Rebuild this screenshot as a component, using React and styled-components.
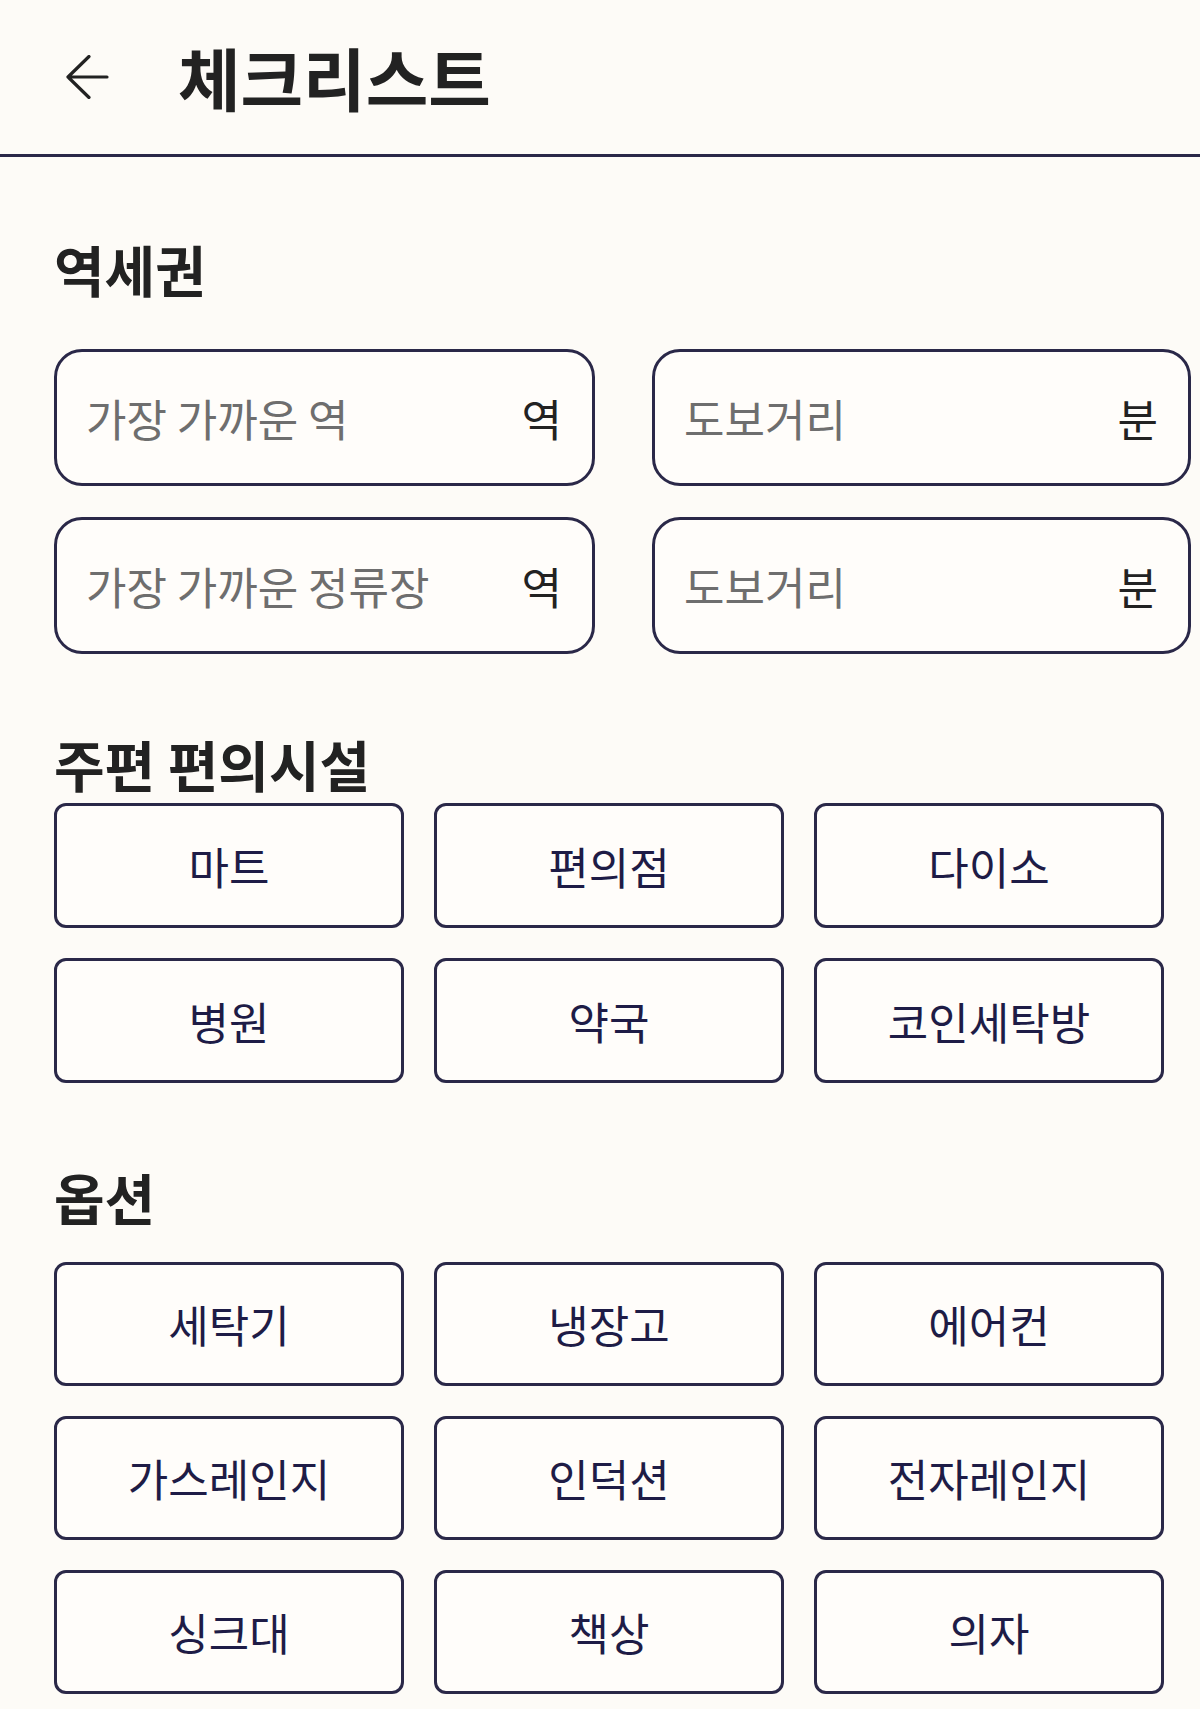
import { useState } from "react";
import styled, { createGlobalStyle } from "styled-components";

const GlobalStyle = createGlobalStyle`
  * {
    box-sizing: border-box;
  }

  body {
    margin: 0;
    background-color: #fdfbf7;
    font-family: "Noto Sans CJK KR", "Noto Sans", sans-serif;
    color: #222;
  }
`;

const Page = styled.div`
  width: 1200px;
  min-height: 1709px;
  background-color: #fdfbf7;
`;

const Header = styled.header`
  display: flex;
  align-items: center;
  height: 157px;
  padding-left: 65px;
  border-bottom: 3px solid #2a2848;
`;

const BackButton = styled.button`
  display: flex;
  align-items: center;
  justify-content: center;
  width: 44px;
  height: 44px;
  padding: 0;
  margin-right: 69px;
  border: none;
  background: none;
  cursor: pointer;
  color: #222;
`;

const Title = styled.h1`
  margin: 0;
  font-size: 68px;
  font-weight: 700;
  line-height: 1.2;
  color: #222;
`;

const Main = styled.main`
  padding: 0 8px 0 54px;
`;

const SectionTitle = styled.h2`
  margin: ${(props) => props.$top}px 0 ${(props) => props.$bottom}px;
  font-size: 55px;
  font-weight: 700;
  line-height: 64px;
  height: 64px;
  color: #222;
`;

const InputGrid = styled.div`
  display: grid;
  grid-template-columns: 541px 539px;
  column-gap: 57px;
  row-gap: 31px;
`;

const Field = styled.label`
  display: flex;
  align-items: center;
  height: 137px;
  padding: 0 30px 0 29px;
  border: 3px solid #2a2848;
  border-radius: 28px;
  background-color: #fffdfa;
`;

const FieldInput = styled.input`
  flex: 1;
  min-width: 0;
  border: none;
  outline: none;
  background: transparent;
  font-family: inherit;
  font-size: 44px;
  color: #222;
  padding: 0;

  &::placeholder {
    color: #6e6e6e;
  }
`;

const Unit = styled.span`
  font-size: 44px;
  color: #222;
  margin-left: 12px;
`;

const ChipGrid = styled.div`
  display: grid;
  grid-template-columns: repeat(3, 350px);
  column-gap: 30px;
  row-gap: 30px;
`;

const Chip = styled.button`
  height: ${(props) => props.$height}px;
  border: 3px solid #2a2848;
  border-radius: 12px;
  background-color: ${(props) => (props.$active ? "#2a2848" : "#fffdfa")};
  color: ${(props) => (props.$active ? "#fff" : "#1e1c46")};
  font-family: inherit;
  font-size: 44px;
  cursor: pointer;
  padding: 0;
`;

const facilities = ["마트", "편의점", "다이소", "병원", "약국", "코인세탁방"];
const options = [
  "세탁기",
  "냉장고",
  "에어컨",
  "가스레인지",
  "인덕션",
  "전자레인지",
  "싱크대",
  "책상",
  "의자",
];

const fields = [
  { placeholder: "가장 가까운 역", unit: "역" },
  { placeholder: "도보거리", unit: "분" },
  { placeholder: "가장 가까운 정류장", unit: "역" },
  { placeholder: "도보거리", unit: "분" },
];

const BackArrow = () => (
  <svg width="44" height="44" viewBox="0 0 44 44" fill="none">
    <path
      d="M42 22H3M24 1.5L3 22L24 42.5"
      stroke="currentColor"
      strokeWidth="3.2"
      strokeLinecap="round"
      strokeLinejoin="round"
    />
  </svg>
);

const App = () => {
  const [selected, setSelected] = useState([]);

  const toggle = (name) => {
    setSelected((prev) =>
      prev.includes(name) ? prev.filter((n) => n !== name) : [...prev, name]
    );
  };

  return (
    <Page>
      <GlobalStyle />
      <Header>
        <BackButton aria-label="뒤로가기">
          <BackArrow />
        </BackButton>
        <Title>체크리스트</Title>
      </Header>

      <Main>
        <SectionTitle $top={79} $bottom={49}>
          역세권
        </SectionTitle>
        <InputGrid>
          {fields.map((f, i) => (
            <Field key={i}>
              <FieldInput placeholder={f.placeholder} />
              <Unit>{f.unit}</Unit>
            </Field>
          ))}
        </InputGrid>

        <SectionTitle $top={77} $bottom={8}>
          주편 편의시설
        </SectionTitle>
        <ChipGrid>
          {facilities.map((name) => (
            <Chip
              key={name}
              $height={125}
              $active={selected.includes(name)}
              onClick={() => toggle(name)}
            >
              {name}
            </Chip>
          ))}
        </ChipGrid>

        <SectionTitle $top={81} $bottom={34}>
          옵션
        </SectionTitle>
        <ChipGrid>
          {options.map((name) => (
            <Chip
              key={name}
              $height={124}
              $active={selected.includes(name)}
              onClick={() => toggle(name)}
            >
              {name}
            </Chip>
          ))}
        </ChipGrid>
      </Main>
    </Page>
  );
};

export default App;
